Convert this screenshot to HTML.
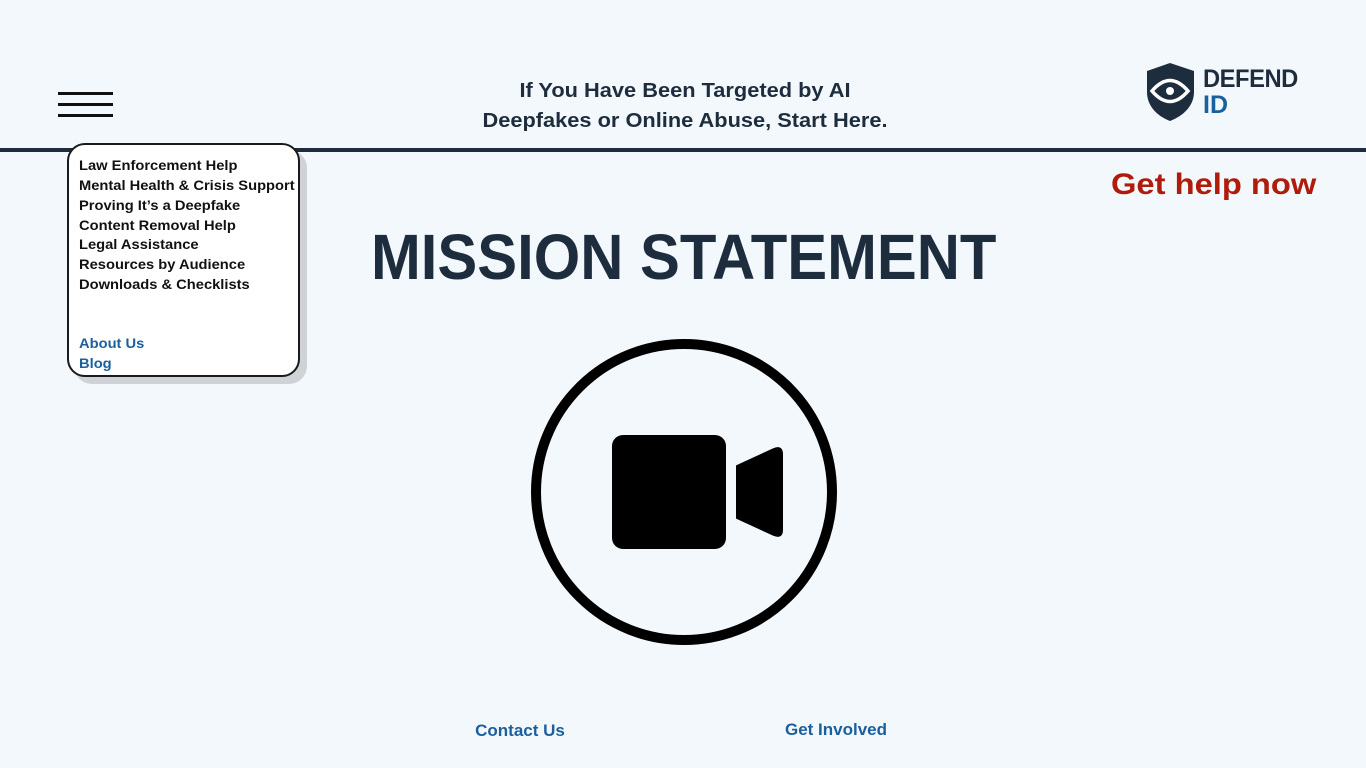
<!DOCTYPE html>
<html><head><meta charset="utf-8"><style>
body{margin:0;width:1366px;height:768px;background:#f3f8fc;position:relative;overflow:hidden;font-family:"Liberation Sans",sans-serif;font-weight:bold}
.a{position:absolute}
.burger div{position:absolute;left:58px;width:55px;height:3px;background:#111}
.hdr{left:383px;width:604px;top:76px;text-align:center;font-size:20px;line-height:30px;color:#1e2d3d;transform:scaleX(1.09)}
.line{left:0;top:148px;width:1366px;height:4px;background:#1e2d3d}
.menu{left:67px;top:143px;width:229px;height:230px;border:2px solid #1a1a1a;border-radius:18px;background:#fff;box-shadow:7px 7px 0 #cfd2d6}
.menu div{position:absolute;left:10px;font-size:14px;line-height:20px;color:#111;white-space:nowrap;transform-origin:left;transform:scaleX(1.05)}
.menu .b{color:#1a5f9e}
</style></head><body>
<div class="burger"><div style="top:92px"></div><div style="top:103px"></div><div style="top:114px"></div></div>
<div class="a hdr">If You Have Been Targeted by AI<br>Deepfakes or Online Abuse, Start Here.</div>
<svg class="a" style="left:1145px;top:62px" width="56" height="60" viewBox="0 0 56 60">
<path d="M25 1 L49 9 V30 C49 44 38 54 25 59 C12 54 2 44 2 30 V9 Z" fill="#1e2d3d"/>
<path d="M7 29 Q25 8 43 29 Q25 50 7 29 Z" fill="none" stroke="#fff" stroke-width="3.5"/>
<circle cx="25" cy="29" r="4" fill="#fff"/>
</svg>
<div class="a" style="left:1203px;top:66px;font-size:25px;line-height:26px;color:#1e2d3d;letter-spacing:-0.5px;transform-origin:left;transform:scaleX(.95)">DEFEND</div>
<div class="a" style="left:1203px;top:92px;font-size:25px;line-height:26px;color:#1a5f9e">ID</div>
<div class="a line"></div>
<div class="a menu">
<div style="top:10px">Law Enforcement Help</div>
<div style="top:30px">Mental Health &amp; Crisis Support</div>
<div style="top:50px">Proving It’s a Deepfake</div>
<div style="top:70px">Content Removal Help</div>
<div style="top:89px">Legal Assistance</div>
<div style="top:109px">Resources by Audience</div>
<div style="top:129px">Downloads &amp; Checklists</div>
<div class="b" style="top:188px">About Us</div>
<div class="b" style="top:208px">Blog</div>
</div>
<div class="a" style="left:1111px;top:166px;font-size:30px;line-height:38px;color:#b01c0b;white-space:nowrap;transform-origin:left;transform:scaleX(1.09)">Get help now</div>
<div class="a" style="left:371px;top:220px;font-size:64px;line-height:74px;color:#1e2d3d;white-space:nowrap;transform-origin:left;transform:scaleX(.934)">MISSION STATEMENT</div>
<svg class="a" style="left:530px;top:338px" width="308" height="308" viewBox="0 0 308 308">
<circle cx="154" cy="154" r="148" fill="none" stroke="#000" stroke-width="10"/>
<rect x="82" y="97" width="114" height="114" rx="11" fill="#000"/>
<path d="M207 128 L244 111 Q252 108 252 116 V192 Q252 200 244 197 L207 180 Z" fill="#000" stroke="#000" stroke-width="2" stroke-linejoin="round"/>
</svg>
<div class="a" style="left:440px;width:160px;text-align:center;top:721px;font-size:17px;color:#1a5f9e">Contact Us</div>
<div class="a" style="left:756px;width:160px;text-align:center;top:720px;font-size:17px;color:#1a5f9e">Get Involved</div>
</body></html>
